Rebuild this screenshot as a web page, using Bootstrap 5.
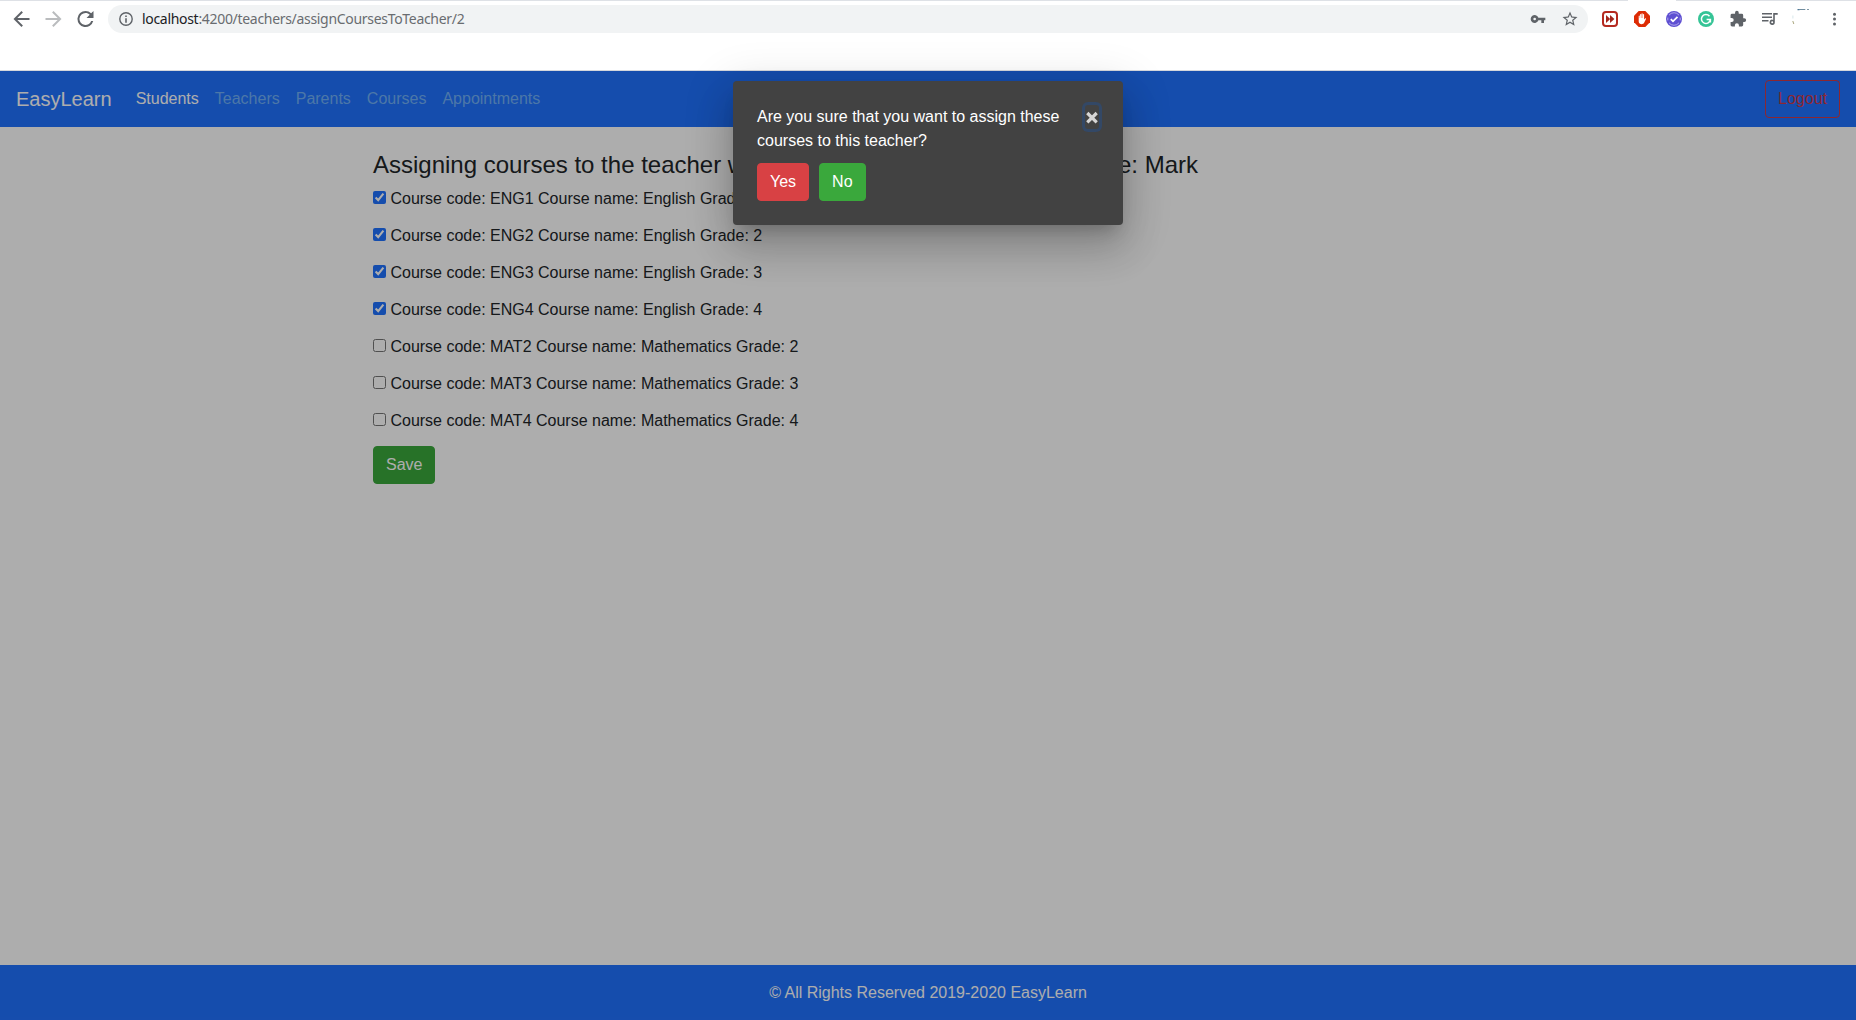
<!DOCTYPE html>
<html lang="en">
<head>
<meta charset="utf-8">
<meta name="viewport" content="width=device-width, initial-scale=1">
<title>EasyLearn</title>
<link href="https://cdn.jsdelivr.net/npm/bootstrap@5.3.0/dist/css/bootstrap.min.css" rel="stylesheet">
<style>
  body { font-family: "Liberation Sans", Arial, sans-serif; height: 1020px; overflow: hidden; color: #212529; }
  .chrome-bar { height: 71px; border-bottom: 1px solid #d5d7dc; background: #fff; }
  .tab-edge { height: 1px; background: linear-gradient(90deg, #dee1e6 1628px, #fff 1628px 1676px, #dee1e6 1676px); }
  .tool-row { height: 28px; margin-top: 4px; padding-left: 12px; }
  .nav-icons { gap: 14px; width: 96px; }
  .omnibox { width: 1480px; height: 28px; border-radius: 14px; background: #f1f3f4; padding: 0 9px 0 9px; }
  .url-text { font: 14px/18px "Noto Sans", sans-serif; color: #696c70; width: 323px; margin: 0 0 1px 7px; letter-spacing: -.31px; white-space: nowrap; }
  .url-text span { color: #202124; }
  .star { margin-left: 15px; }
  .ext-icons { gap: 12px; margin-left: 12px; }
  svg { display: block; flex: none; }
  .site { height: 949px; }
  .brand-blue { background: #2072ff; }
  .main-nav { height: 56px; padding: 0 16px; }
  .main-nav .navbar-brand { font-size: 20px; margin-right: 16px; }
  .main-nav .nav-link { --bs-navbar-nav-link-padding-x: 8px; color: #71b0f8; }
  .main-nav .nav-link.active { color: #fff; }
  .btn { border-radius: 4px; }
  .logout { color: #d03a48; border-color: #d03a48; }
  .green { background: #3aa83c; border-color: #3aa83c; color: #fff; }
  .red { background: #d84144; border-color: #d84144; color: #fff; }
  .page-col { width: 1110px; margin: 0 auto; padding-top: 24px; }
  .page-title { font-size: 24px; line-height: 28.8px; font-weight: 400; width: 825px; margin-bottom: 7.2px; white-space: nowrap; }
  .course-row { height: 37px; line-height: 24px; }
  .course-row input { width: 13px; height: 13px; margin: 4px 4.450px 0 0; accent-color: #2072ff; }
  .site-footer { height: 55px; color: #fff; }
  .dim { position: absolute; left: 0; right: 0; top: 71px; bottom: 0; background: rgba(0,0,0,.32); }
  .confirm-box { width: 390px; height: 144px; margin: 10px auto 0; padding: 24px; background: #424242; color: #fff; border-radius: 4px;
    box-shadow: 0 11px 15px -7px rgba(0,0,0,.2), 0 24px 38px 3px rgba(0,0,0,.14), 0 9px 46px 8px rgba(0,0,0,.12); }
  .confirm-text { width: 306px; line-height: 24px; margin-bottom: 10px; }
  .x-close { width: 14px; height: 24px; border: 0; padding: 0; background: none; border-radius: 3px; box-shadow: 0 0 0 3px #334866; }
</style>
<script src="https://cdn.jsdelivr.net/npm/bootstrap@5.3.0/dist/js/bootstrap.bundle.min.js"></script>
</head>
<body>
<header class="chrome-bar">
  <div class="tab-edge"></div>
  <div class="tool-row d-flex align-items-center">
    <div class="nav-icons d-flex">
      <svg width="18" height="18" viewBox="2.500 3 18 18" fill="#5f6368"><path d="M20 11H7.830l5.590-5.590L12 4l-8 8 8 8 1.410-1.410L7.830 13H20v-2z"/></svg>
      <svg width="18" height="18" viewBox="2.500 3 18 18" fill="#babcbe"><path d="M12 4l-1.410 1.410L16.170 11H4v2h12.170l-5.580 5.590L12 20l8-8z"/></svg>
      <svg width="18" height="18" viewBox="2.500 3 18 18" fill="#5f6368"><path d="M17.650 6.350A7.960 7.960 0 0 0 12 4a8 8 0 1 0 7.730 10h-2.080A6 6 0 1 1 12 6c1.660 0 3.140.69 4.220 1.780L13 11h7V4l-2.350 2.350z"/></svg>
    </div>
    <div class="omnibox d-flex align-items-center">
      <svg width="18" height="18" viewBox="0 0 18 18"><circle cx="9" cy="9" r="6.200" fill="none" stroke="#5f6368" stroke-width="1.400"/><path d="M8.200 5.400h1.600V7H8.200zM8.200 8.200h1.600v4.500H8.200z" fill="#5f6368"/></svg>
      <div class="url-text"><span>localhost</span>:4200/teachers/assignCoursesToTeacher/2</div>
      <svg class="ms-auto" width="16" height="16" viewBox="0 0 24 24" fill="#5f6368"><path d="M12.650 10A6 6 0 1 0 12.650 14H17v4h4v-4h2v-4H12.650zM7 14a2 2 0 1 1 0-4 2 2 0 0 1 0 4z"/></svg>
      <svg class="star" width="18" height="18" viewBox="0 0 24 24" fill="#5f6368"><path d="M22 9.240l-7.190-.62L12 2 9.190 8.630 2 9.240l5.460 4.730L5.820 21 12 17.270 18.180 21l-1.630-7.030L22 9.240zM12 15.400l-3.760 2.270 1-4.280-3.320-2.880 4.380-.38L12 6.100l1.710 4.040 4.380.38-3.320 2.880 1 4.280L12 15.400z"/></svg>
    </div>
    <div class="ext-icons d-flex align-items-center">
      <svg width="20" height="20" viewBox="0 0 20 20"><rect x="3" y="3" width="14" height="14" rx="3" fill="#fff" stroke="#b52a20" stroke-width="2"/><path d="M6 6l4.200 4L6 14zM10 6l4.400 4-4.400 4z" fill="#a3261c"/></svg>
      <svg width="20" height="20" viewBox="0 0 20 20"><path d="M6.700 2h6.600L18 6.700v6.600L13.300 18H6.700L2 13.300V6.700z" fill="#dd2c05"/><path d="M6.700 7.200c0-.8 1.100-.8 1.100 0V9h.3V5.500c0-.8 1.100-.8 1.100 0V9h.3V4.900c0-.8 1.200-.8 1.200 0V9h.3V5.600c0-.8 1.100-.8 1.100 0v5l1-1.200c.5-.5 1.200-.1.900.5L12 14c-.9 1.700-5.300 1.700-5.300-1.500z" fill="#fff"/></svg>
      <svg width="20" height="20" viewBox="0 0 20 20"><circle cx="10" cy="10" r="8" fill="#5f50d2"/><path d="M5 6.200a6.300 6.300 0 0 1 10 0M5 13.800a6.300 6.300 0 0 0 10 0M3.800 8.600v2.800M16.200 8.600v2.800" fill="none" stroke="#b7b0ee" stroke-width=".9"/><path d="M6.800 10.100l2.200 2.200 4.500-4.400" fill="none" stroke="#fff" stroke-width="1.800"/></svg>
      <svg width="20" height="20" viewBox="0 0 20 20"><circle cx="10" cy="10" r="8" fill="#35c496"/><path d="M13.500 7.200A4.500 4.500 0 1 0 14.400 10.600H10.600M14.400 10v3.500" fill="none" stroke="#fff" stroke-width="1.500"/></svg>
      <svg width="20" height="20" viewBox="-1.500 -1.500 27 27" fill="#5f6368"><path d="M20.500 11H19V7a2 2 0 0 0-2-2h-4V3.500a2.500 2.500 0 0 0-5 0V5H4a2 2 0 0 0-2 2v3.800h1.500a2.700 2.700 0 0 1 0 5.400H2V20a2 2 0 0 0 2 2h3.800v-1.500a2.700 2.700 0 0 1 5.400 0V22H17a2 2 0 0 0 2-2v-4h1.500a2.500 2.500 0 0 0 0-5z"/></svg>
      <svg width="20" height="20" viewBox="0 0 20 20" fill="#5f6368"><path d="M2 4h10v1.500H2zM2 7.500h10V9H2zM2 11h6.500v1.500H2zM13.200 4h4.500v1.700h-2.900v7.600a2.600 2.600 0 1 1-1.600-2.400zM12.200 12.300a1 1 0 1 0 0 2 1 1 0 0 0 0-2z"/></svg>
      <svg width="20" height="20" viewBox="0 0 20 20"><path d="M5.500 .6h2M8.500 -.2h5" stroke="#4d7999" stroke-width="1.200"/><path d="M7 .5h6M15 .4h2" stroke="#718d9e" stroke-width="1"/><path d="M.9 6.500v3" stroke="#d7e7eb"/><path d="M.8 12l1 3" stroke="#a9a67e"/></svg>
      <svg width="20" height="20" viewBox="-.500 0 20 20" fill="#5f6368"><circle cx="10" cy="5.200" r="1.500"/><circle cx="10" cy="10" r="1.500"/><circle cx="10" cy="14.900" r="1.500"/></svg>
    </div>
  </div>
</header>
<div class="site d-flex flex-column">
  <nav class="navbar navbar-expand navbar-dark main-nav brand-blue">
    <a class="navbar-brand" href="#">EasyLearn</a>
    <div class="navbar-nav me-auto">
      <a class="nav-link active" href="#">Students</a>
      <a class="nav-link" href="#">Teachers</a>
      <a class="nav-link" href="#">Parents</a>
      <a class="nav-link" href="#">Courses</a>
      <a class="nav-link" href="#">Appointments</a>
    </div>
    <button class="btn logout">Logout</button>
  </nav>
  <main class="flex-grow-1">
    <div class="page-col">
      <h4 class="page-title d-flex justify-content-between"><span>Assigning courses to the teacher with</span><span>name: Mark</span></h4>
      <label class="course-row d-flex"><input type="checkbox" checked>Course code: ENG1 Course name: English Grade: 1</label>
      <label class="course-row d-flex"><input type="checkbox" checked>Course code: ENG2 Course name: English Grade: 2</label>
      <label class="course-row d-flex"><input type="checkbox" checked>Course code: ENG3 Course name: English Grade: 3</label>
      <label class="course-row d-flex"><input type="checkbox" checked>Course code: ENG4 Course name: English Grade: 4</label>
      <label class="course-row d-flex"><input type="checkbox">Course code: MAT2 Course name: Mathematics Grade: 2</label>
      <label class="course-row d-flex"><input type="checkbox">Course code: MAT3 Course name: Mathematics Grade: 3</label>
      <label class="course-row d-flex"><input type="checkbox">Course code: MAT4 Course name: Mathematics Grade: 4</label>
      <button class="btn green">Save</button>
    </div>
  </main>
  <footer class="site-footer brand-blue d-flex align-items-center justify-content-center">© All Rights Reserved 2019-2020 EasyLearn</footer>
</div>
<div class="dim">
  <div class="confirm-box" role="dialog">
    <div class="d-flex">
      <div class="confirm-text">Are you sure that you want to assign these courses to this teacher?</div>
      <button class="x-close ms-auto" aria-label="Close"><svg width="14" height="24" viewBox="0 0 14 24"><path d="M2.300 8l9.400 9.400M11.700 8l-9.400 9.400" stroke="#d6d6d6" stroke-width="3.200"/></svg></button>
    </div>
    <div class="d-flex">
      <button class="btn red">Yes</button>
      <button class="btn green" style="margin-left:10px">No</button>
    </div>
  </div>
</div>
</body>
</html>
